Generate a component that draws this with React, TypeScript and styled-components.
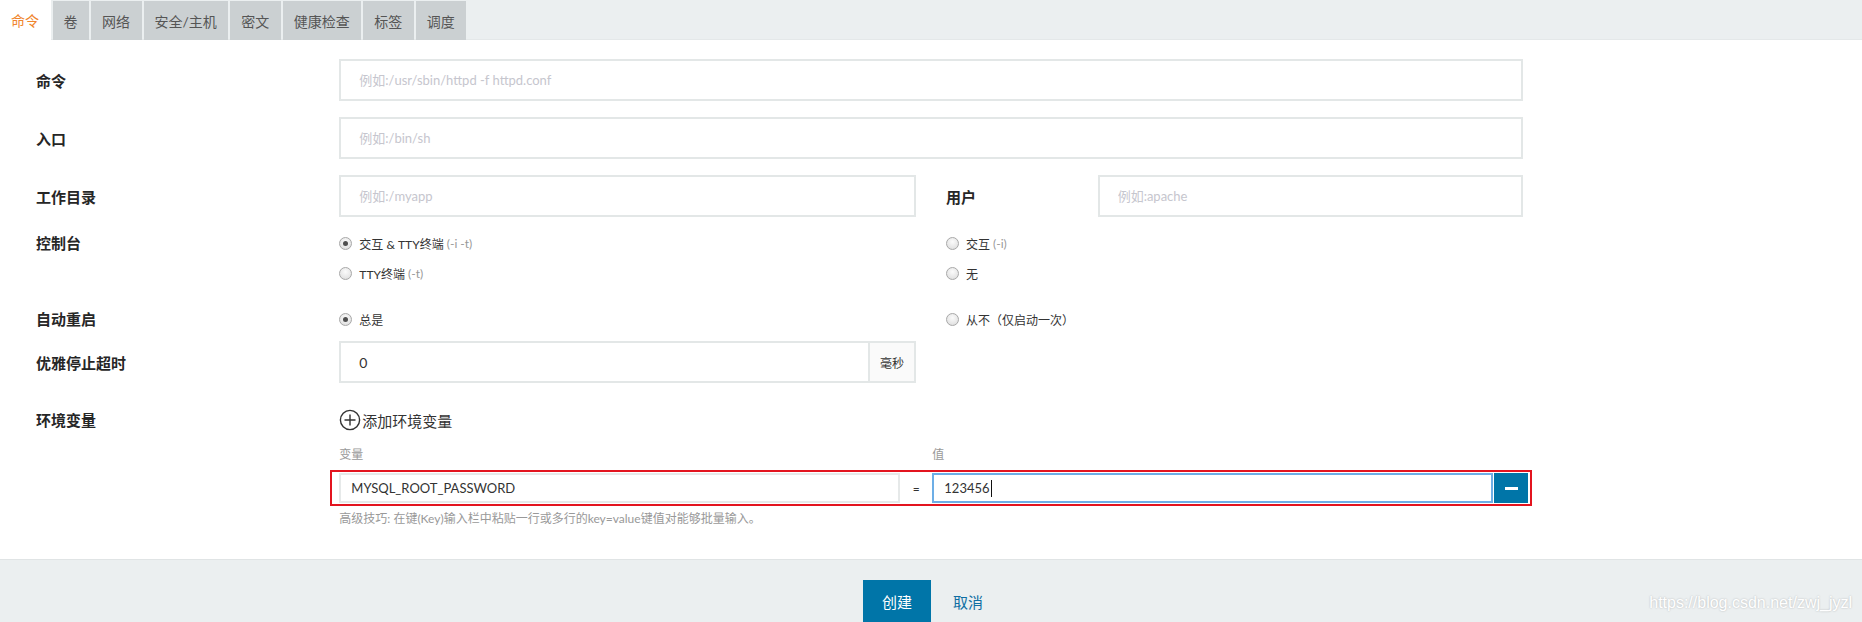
import styled, { createGlobalStyle } from "styled-components";

const GlobalStyle = createGlobalStyle`
  html, body {
    margin: 0;
    padding: 0;
    background: #fff;
  }
  body {
    font-family: Lato, "Noto Sans CJK SC", sans-serif;
    color: #333;
  }
  * {
    box-sizing: border-box;
  }
`;

const tabs = ["命令", "卷", "网络", "安全/主机", "密文", "健康检查", "标签", "调度"];

const App = () => {
  return (
    <Page>
      <GlobalStyle />
      <TabBar>
        {tabs.map((t, i) => (
          <Tab key={t} $active={i === 0}>
            {t}
          </Tab>
        ))}
      </TabBar>

      <Form>
        <Row $mb={16}>
          <Label $top={12}>命令</Label>
          <Field $span={8}>
            <TextInput placeholder="例如:/usr/sbin/httpd -f httpd.conf" />
          </Field>
        </Row>

        <Row $mb={16}>
          <Label $top={12}>入口</Label>
          <Field $span={8}>
            <TextInput placeholder="例如:/bin/sh" />
          </Field>
        </Row>

        <Row $mb={16}>
          <Label $top={12}>工作目录</Label>
          <Field $span={4}>
            <TextInput placeholder="例如:/myapp" />
          </Field>
          <Label $top={12} $span={1}>
            用户
          </Label>
          <Field $span={3}>
            <TextInput placeholder="例如:apache" />
          </Field>
        </Row>

        <Row $mb={26}>
          <Label $top={0}>控制台</Label>
          <Field $span={4}>
            <RadioList>
              <RadioLine>
                <Radio $checked />
                交互 &amp; TTY终端 <Hint>(-i -t)</Hint>
              </RadioLine>
              <RadioLine>
                <Radio />
                TTY终端 <Hint>(-t)</Hint>
              </RadioLine>
            </RadioList>
          </Field>
          <Field $span={4}>
            <RadioList>
              <RadioLine>
                <Radio />
                交互 <Hint>(-i)</Hint>
              </RadioLine>
              <RadioLine>
                <Radio />无
              </RadioLine>
            </RadioList>
          </Field>
        </Row>

        <Row $mb={12}>
          <Label $top={0}>自动重启</Label>
          <Field $span={4}>
            <RadioLine>
              <Radio $checked />
              总是
            </RadioLine>
          </Field>
          <Field $span={4}>
            <RadioLine>
              <Radio />
              从不（仅启动一次）
            </RadioLine>
          </Field>
        </Row>

        <Row $mb={26}>
          <Label $top={12}>优雅停止超时</Label>
          <Field $span={4}>
            <InputGroup>
              <GroupInput defaultValue="0" />
              <Addon>毫秒</Addon>
            </InputGroup>
          </Field>
        </Row>

        <Row $mb={14}>
          <Label $top={1}>环境变量</Label>
          <Field $span={8}>
            <AddLink>
              <svg width="22" height="22" viewBox="0 0 22 22">
                <circle cx="11" cy="11" r="9.6" fill="none" stroke="#333" strokeWidth="1.4" />
                <path d="M11 5.5v11M5.5 11h11" stroke="#333" strokeWidth="1.4" />
              </svg>
              添加环境变量
            </AddLink>
          </Field>
        </Row>

        <Row $mb={0}>
          <EnvBlock>
            <EnvHead>
              <span>变量</span>
              <span />
              <span>值</span>
              <span />
            </EnvHead>
            <Highlight>
              <EnvRow>
                <EnvInput defaultValue="MYSQL_ROOT_PASSWORD" />
                <Equals>=</Equals>
                <ValueBox>
                  123456
                  <Caret />
                </ValueBox>
                <RemoveButton type="button" aria-label="remove">
                  <MinusBar />
                </RemoveButton>
              </EnvRow>
            </Highlight>
            <HelpText>
              高级技巧: 在键(Key)输入栏中粘贴一行或多行的key=value键值对能够批量输入。
            </HelpText>
          </EnvBlock>
        </Row>
      </Form>

      <Footer>
        <PrimaryButton type="button">创建</PrimaryButton>
        <LinkButton type="button">取消</LinkButton>
        <Watermark>https://blog.csdn.net/zwj_jyzl</Watermark>
      </Footer>
    </Page>
  );
};

export default App;

const Page = styled.div`
  width: 100%;
  min-height: 622px;
  display: flex;
  flex-direction: column;
`;

const TabBar = styled.nav`
  display: flex;
  gap: 2px;
  height: 40px;
  padding-top: 1px;
  background: #ebeff0;
  border-bottom: 1px solid #e4e8e9;
`;

const Tab = styled.div<{ $active?: boolean }>`
  display: flex;
  align-items: center;
  height: ${(p) => (p.$active ? "40px" : "39px")};
  margin-top: ${(p) => (p.$active ? "-1px" : "0")};
  padding: 0 11.5px 0 11px;
  font-size: 14px;
  color: ${(p) => (p.$active ? "#f0852d" : "#555")};
  background: ${(p) => (p.$active ? "#fff" : "#cbd0d2")};
  cursor: pointer;
`;

const Form = styled.div`
  padding: 19px 36px 31px;
`;

const Row = styled.div<{ $mb: number }>`
  display: grid;
  grid-template-columns: repeat(12, 1fr);
  column-gap: 30px;
  margin-bottom: ${(p) => p.$mb}px;
`;

const Label = styled.label<{ $top: number; $span?: number }>`
  grid-column: span ${(p) => p.$span ?? 2};
  padding-top: ${(p) => p.$top}px;
  font-size: 15px;
  line-height: 20px;
  font-weight: 700;
  color: #262626;
`;

const Field = styled.div<{ $span: number }>`
  grid-column: span ${(p) => p.$span};
`;

const TextInput = styled.input`
  display: block;
  width: 100%;
  height: 42px;
  padding: 0 18px;
  border: 2px solid #e3e7e7;
  border-radius: 0;
  font-family: inherit;
  font-size: 13px;
  color: #333;
  outline: none;

  &::placeholder {
    color: #c6c6ce;
  }
`;

const RadioList = styled.div`
  display: flex;
  flex-direction: column;
  gap: 10px;
`;

const RadioLine = styled.div`
  display: flex;
  align-items: center;
  height: 20px;
  font-size: 12px;
  color: #333;
  white-space: pre;
`;

const Radio = styled.span<{ $checked?: boolean }>`
  position: relative;
  width: 13px;
  height: 13px;
  margin-right: 7px;
  border-radius: 50%;
  border: 1px solid #a8a8a8;
  background: radial-gradient(circle at 50% 35%, #fbfbfb 0%, #e4e4e4 70%, #d2d2d2 100%);

  &::after {
    content: "";
    display: ${(p) => (p.$checked ? "block" : "none")};
    position: absolute;
    left: 3px;
    top: 3px;
    width: 5px;
    height: 5px;
    border-radius: 50%;
    background: #4f4f4f;
  }
`;

const Hint = styled.span`
  color: #999;
`;

const InputGroup = styled.div`
  display: flex;
  height: 42px;
  border: 2px solid #e3e7e7;
`;

const GroupInput = styled.input`
  flex: 1;
  min-width: 0;
  padding: 0 18px;
  border: none;
  font-family: inherit;
  font-size: 14px;
  color: #333;
  outline: none;
`;

const Addon = styled.span`
  display: flex;
  align-items: center;
  justify-content: center;
  width: 46px;
  border-left: 2px solid #e3e7e7;
  background: #fafafa;
  font-size: 12px;
  color: #333;
`;

const AddLink = styled.div`
  display: flex;
  align-items: center;
  height: 22px;
  font-size: 15px;
  color: #333;
  cursor: pointer;

  svg {
    margin-right: 1px;
  }
`;

const EnvBlock = styled.div`
  grid-column: 3 / -1;
`;

const envColumns = "561px 32px 561px 35px";

const EnvHead = styled.div`
  display: grid;
  grid-template-columns: ${envColumns};
  height: 20px;
  line-height: 20px;
  margin-bottom: 5px;
  font-size: 12px;
  color: #999;
`;

const Highlight = styled.div`
  width: 1202px;
  margin-left: -9px;
  padding: 1px 1px 1px 7px;
  border: 2px solid #e3141f;
`;

const EnvRow = styled.div`
  display: grid;
  grid-template-columns: ${envColumns};
  height: 30px;
`;

const EnvInput = styled.input`
  height: 30px;
  padding: 0 10px;
  border: 2px solid #e6e9e9;
  font-family: inherit;
  font-size: 13px;
  color: #333;
  outline: none;
`;

const Equals = styled.span`
  display: flex;
  align-items: center;
  justify-content: center;
  font-size: 12px;
  color: #333;
`;

const ValueBox = styled.div`
  display: flex;
  align-items: center;
  height: 30px;
  padding: 0 10px;
  border: 2px solid #6daee6;
  font-size: 13px;
  color: #333;
`;

const Caret = styled.span`
  width: 1px;
  height: 17px;
  margin-left: 1px;
  background: #111;
`;

const RemoveButton = styled.button`
  display: flex;
  align-items: center;
  justify-content: center;
  height: 30px;
  margin-left: 1px;
  padding: 0;
  border: none;
  background: #0075a8;
  cursor: pointer;
`;

const MinusBar = styled.span`
  width: 13px;
  height: 3px;
  background: #fff;
`;

const HelpText = styled.p`
  margin: 4px 0 0;
  font-size: 12px;
  line-height: 18px;
  color: #999;
`;

const Footer = styled.footer`
  position: relative;
  flex: 1;
  display: flex;
  justify-content: center;
  align-items: flex-start;
  gap: 2px;
  padding: 20px 0 20px 4px;
  border-top: 1px solid #e0e4e5;
  background: #ebeff0;
`;

const PrimaryButton = styled.button`
  height: 42px;
  padding: 0 19px;
  border: none;
  background: #0075a8;
  color: #fff;
  font-family: inherit;
  font-size: 15px;
  cursor: pointer;
`;

const LinkButton = styled.button`
  height: 42px;
  padding: 0 20px;
  border: none;
  background: transparent;
  color: #0f6ea3;
  font-family: inherit;
  font-size: 15px;
  cursor: pointer;
`;

const Watermark = styled.span`
  position: absolute;
  right: 10px;
  top: 34px;
  font-family: "Liberation Sans", sans-serif;
  font-size: 16px;
  color: #fff;
  text-shadow: 0 0 2px rgba(0, 0, 0, 0.25);
`;
